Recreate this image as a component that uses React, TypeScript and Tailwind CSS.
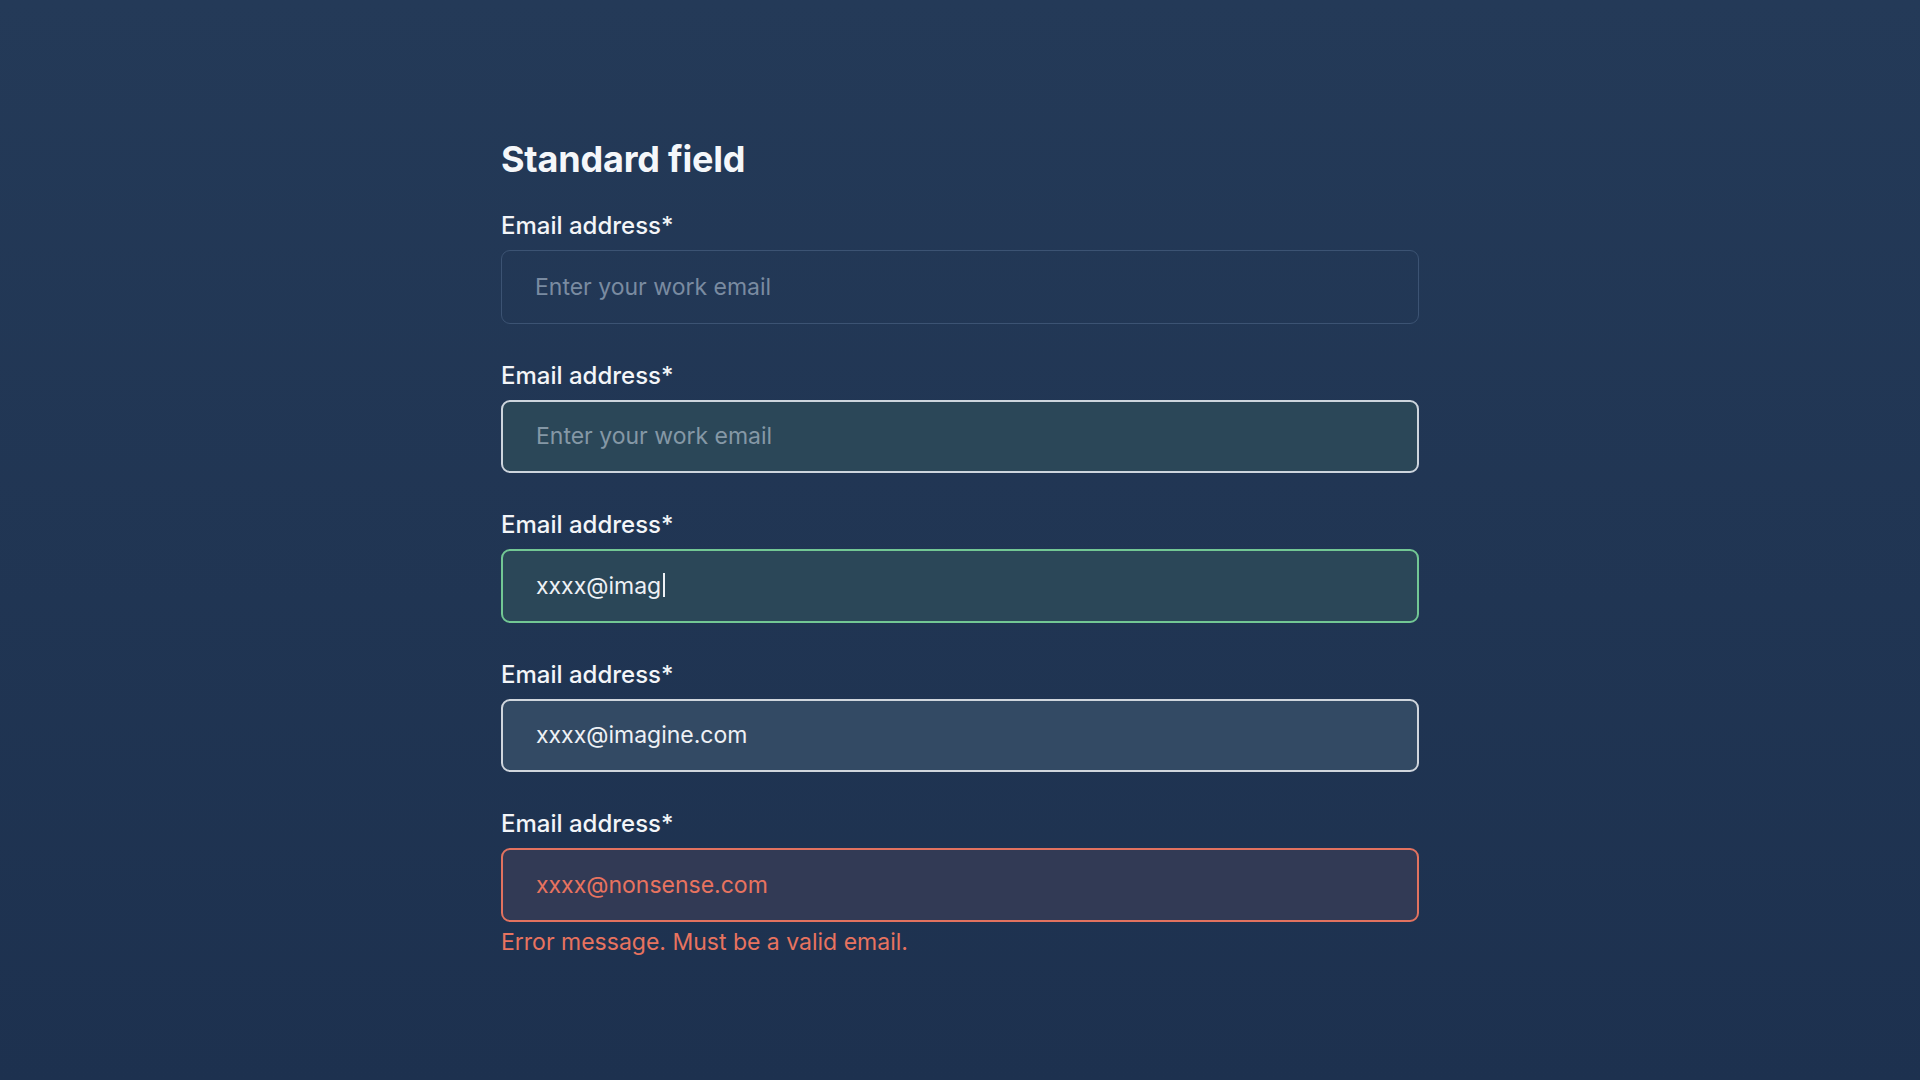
import React from 'react';

type FieldState = 'default' | 'focus' | 'typing' | 'filled' | 'error';

const boxStyles: Record<FieldState, string> = {
  default: 'bg-transparent border-[1.5px] border-[#3c5373]',
  focus: 'bg-[#2b4758] border-2 border-[#cdd5dd]',
  typing: 'bg-[#2b4758] border-2 border-[#72c794]',
  filled: 'bg-[#334a64] border-2 border-[#d0d6dd]',
  error: 'bg-[#323a55] border-2 border-[#e2725f]',
};

function EmailField({ state, value, placeholder }: { state: FieldState; value?: string; placeholder?: string }) {
  return (
    <div className="flex flex-col">
      <label className="text-[24px] leading-[28px] font-medium text-[#f3f5f8]">Email address*</label>
      <div className={`mt-[10px] h-[73.5px] rounded-[9px] flex items-center px-[33px] ${boxStyles[state]}`}>
        {value ? (
          <span className={`text-[23px] ${state === 'error' ? 'text-[#e8735f]' : 'text-[#eef1f5]'}`}>
            {value}
            {state === 'typing' && <span className="inline-block align-middle ml-[2px] w-[2px] h-[24px] bg-[#eef1f5] -mt-[4px]" />}
          </span>
        ) : (
          <span className={`text-[23px] ${state === 'focus' ? 'text-[#8598a6]' : 'text-[#7a8ba1]'}`}>{placeholder}</span>
        )}
      </div>
      {state === 'error' && (
        <p className="mt-[6px] text-[23px] leading-[28px] text-[#e8735f]">Error message. Must be a valid email.</p>
      )}
    </div>
  );
}

export default function App() {
  return (
    <div
      className="w-full min-h-[1080px] bg-linear-to-b from-[#243a58] to-[#1d314f] flex justify-center"
      style={{ fontFamily: 'Inter, "Noto Sans", sans-serif' }}
    >
      <div className="w-[918px] pt-[138px] flex flex-col">
        <h1 className="text-[36px] leading-[42px] font-bold text-[#f5f7fa] tracking-[-0.2px]">Standard field</h1>
        <div className="mt-[32px] flex flex-col gap-[38px]">
          <EmailField state="default" placeholder="Enter your work email" />
          <EmailField state="focus" placeholder="Enter your work email" />
          <EmailField state="typing" value="xxxx@imag" />
          <EmailField state="filled" value="xxxx@imagine.com" />
          <EmailField state="error" value="xxxx@nonsense.com" />
        </div>
      </div>
    </div>
  );
}
